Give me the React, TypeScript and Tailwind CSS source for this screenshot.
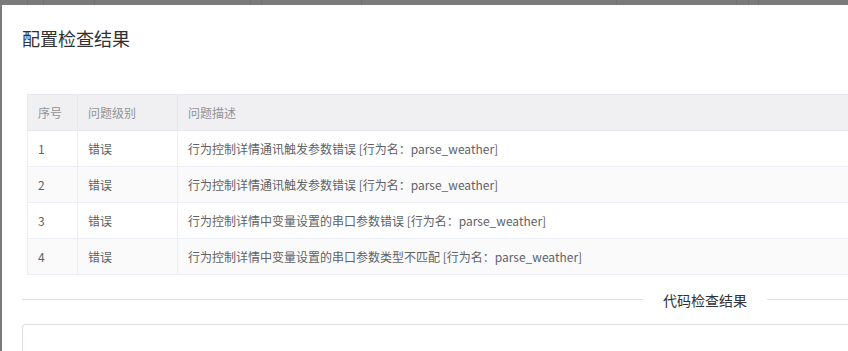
import React from 'react';

const rows = [
    { id: 1, level: '错误', desc: '行为控制详情通讯触发参数错误 [行为名：parse_weather]' },
    { id: 2, level: '错误', desc: '行为控制详情通讯触发参数错误 [行为名：parse_weather]' },
    { id: 3, level: '错误', desc: '行为控制详情中变量设置的串口参数错误 [行为名：parse_weather]' },
    { id: 4, level: '错误', desc: '行为控制详情中变量设置的串口参数类型不匹配 [行为名：parse_weather]' },
];

// widths of the page columns peeking out behind the overlay
const bgCols = [28, 16, 51, 156, 11, 100, 255, 120, 12, 10];

export default function App() {
    return (
        <div
            className="w-[848px] h-[351px] overflow-hidden bg-[#7b7b7b] flex flex-col"
            style={{ fontFamily: '"Noto Sans CJK SC", "Noto Sans", "Liberation Sans", sans-serif' }}
        >
            <div className="h-[5px] flex shrink-0">
                {bgCols.map((w, i) => (
                    <div key={i} className="h-full border-r border-[#717171]" style={{ width: w }} />
                ))}
            </div>

            <div className="flex flex-1 min-h-0">
                <div className="w-[2px] shrink-0" />
                <div className="w-[1406px] shrink-0 bg-white px-5 pt-[21px] flex flex-col">
                    <h2 className="text-[18px] leading-6 text-[#303133]">配置检查结果</h2>

                    <table className="mt-[44px] ml-[5px] w-[1361px] border-collapse text-[12px] table-fixed">
                        <colgroup>
                            <col className="w-[50px]" />
                            <col className="w-[100px]" />
                            <col />
                        </colgroup>
                        <thead>
                            <tr className="h-9 bg-[#f0f0f2] text-[#909399]">
                                <th className="border border-[#e8e9ef] px-[10px] text-left font-normal">序号</th>
                                <th className="border border-[#e8e9ef] px-[10px] text-left font-normal">问题级别</th>
                                <th className="border border-[#e8e9ef] px-[10px] text-left font-normal">问题描述</th>
                            </tr>
                        </thead>
                        <tbody className="text-[#606266]">
                            {rows.map((r, i) => (
                                <tr key={r.id} className={i % 2 ? 'h-9 bg-[#fafafa]' : 'h-9 bg-white'}>
                                    <td className="border border-[#ebeef5] px-[10px]">{r.id}</td>
                                    <td className="border border-[#ebeef5] px-[10px]">{r.level}</td>
                                    <td className="border border-[#ebeef5] px-[10px]">{r.desc}</td>
                                </tr>
                            ))}
                        </tbody>
                    </table>

                    <div className="relative my-6 h-px bg-[#dcdfe6]">
                        <span className="absolute left-1/2 top-1/2 -translate-x-1/2 -translate-y-1/2 bg-white px-5 text-[14px] text-[#303133] whitespace-nowrap">
                            代码检查结果
                        </span>
                    </div>

                    <div className="flex-1 rounded-t border border-b-0 border-[#dcdfe6]" />
                </div>
            </div>
        </div>
    );
}
